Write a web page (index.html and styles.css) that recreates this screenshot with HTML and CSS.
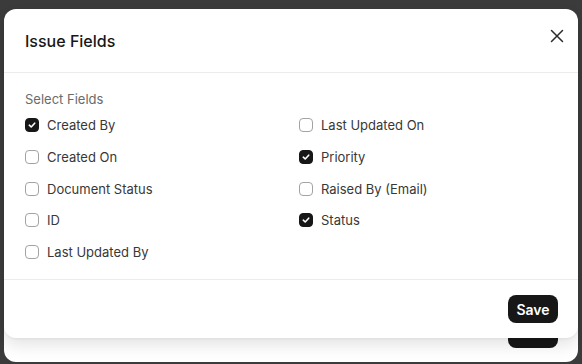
FILE: index.html
```html
<!DOCTYPE html>
<html>
<head>
<meta charset="utf-8">
<link rel="stylesheet" href="styles.css">
</head>
<body>
<div class="backdrop">
  <div class="under-panel">
    <div class="under-btn"></div>
  </div>
  <div class="modal">
    <div class="modal-header">
      <h2 class="modal-title">Issue Fields</h2>
      <button class="close-btn" aria-label="Close">
        <svg width="14" height="14" viewBox="0 0 14 14"><path d="M1.5 1.5 L12.5 12.5 M12.5 1.5 L1.5 12.5" stroke="#2b2b2b" stroke-width="1.5" fill="none" stroke-linecap="round"/></svg>
      </button>
    </div>
    <div class="modal-body">
      <div class="section-label">Select Fields</div>
      <div class="field-grid">
        <label class="field"><span class="box checked"><svg width="10" height="10" viewBox="0 0 10 10"><path d="M2.3 5.2 L4.2 7 L7.7 3.2" stroke="#fff" stroke-width="1.6" fill="none" stroke-linecap="round" stroke-linejoin="round"/></svg></span>Created By</label>
        <label class="field"><span class="box"></span>Last Updated On</label>
        <label class="field"><span class="box"></span>Created On</label>
        <label class="field"><span class="box checked"><svg width="10" height="10" viewBox="0 0 10 10"><path d="M2.3 5.2 L4.2 7 L7.7 3.2" stroke="#fff" stroke-width="1.6" fill="none" stroke-linecap="round" stroke-linejoin="round"/></svg></span>Priority</label>
        <label class="field"><span class="box"></span>Document Status</label>
        <label class="field"><span class="box"></span>Raised By (Email)</label>
        <label class="field"><span class="box"></span>ID</label>
        <label class="field"><span class="box checked"><svg width="10" height="10" viewBox="0 0 10 10"><path d="M2.3 5.2 L4.2 7 L7.7 3.2" stroke="#fff" stroke-width="1.6" fill="none" stroke-linecap="round" stroke-linejoin="round"/></svg></span>Status</label>
        <label class="field"><span class="box"></span>Last Updated By</label>
      </div>
    </div>
    <div class="modal-footer">
      <button class="save-btn">Save</button>
    </div>
  </div>
</div>
</body>
</html>
```

FILE: styles.css
```css
* { box-sizing: border-box; }
html, body { margin: 0; padding: 0; }
body {
  width: 582px;
  height: 364px;
  overflow: hidden;
  background: #3b3b3b;
  font-family: Inter, "Noto Sans", sans-serif;
}
.backdrop {
  position: relative;
  width: 582px;
  height: 364px;
}
.under-panel {
  position: absolute;
  left: 4px;
  right: 4px;
  top: 40px;
  bottom: 2px;
  background: #ffffff;
  border-radius: 12px;
}
.under-btn {
  position: absolute;
  right: 20px;
  bottom: 14px;
  width: 50px;
  height: 28px;
  background: #171717;
  border-radius: 8px;
}
.modal {
  position: absolute;
  left: 4px;
  top: 9px;
  width: 574px;
  height: 329px;
  background: #fff;
  border-radius: 12px;
  box-shadow: 0 8px 16px rgba(0,0,0,0.10), 0 1px 3px rgba(0,0,0,0.06);
  display: flex;
  flex-direction: column;
}
.modal-header {
  height: 64px;
  border-bottom: 1px solid #ececec;
  display: flex;
  justify-content: space-between;
  align-items: flex-start;
  padding: 0 9px 0 21px;
}
.modal-title {
  margin: 0;
  align-self: center;
  font-size: 16px;
  font-weight: 500;
  color: #171717;
  line-height: 20px;
  margin-top: 1px;
}
.close-btn {
  margin-top: 15px;
  width: 24px;
  height: 24px;
  border: none;
  background: transparent;
  padding: 0;
  display: flex;
  align-items: center;
  justify-content: center;
}
.modal-body {
  padding: 18px 21px 17px 21px;
  border-bottom: 1px solid #ececec;
}
.section-label {
  font-size: 13px;
  line-height: 16px;
  color: #6b6b6b;
  margin-bottom: 8px;
}
.field-grid {
  display: grid;
  grid-template-columns: 1fr 1fr;
  column-gap: 16px;
  row-gap: 11.75px;
}
.field {
  display: flex;
  align-items: center;
  gap: 8px;
  height: 20px;
  font-size: 13px;
  color: #383838;
}
.box {
  width: 14px;
  height: 14px;
  border: 1px solid #a3a3a3;
  border-radius: 4px;
  display: flex;
  align-items: center;
  justify-content: center;
  flex: none;
}
.box.checked {
  background: #171717;
  border-color: #171717;
}
.modal-footer {
  flex: 1;
  display: flex;
  justify-content: flex-end;
  align-items: center;
  padding: 0 20px;
}
.save-btn {
  width: 50px;
  height: 28px;
  border: none;
  border-radius: 8px;
  background: #171717;
  color: #fff;
  font-family: inherit;
  font-size: 14px;
  font-weight: 600;
  padding: 0;
}
```
